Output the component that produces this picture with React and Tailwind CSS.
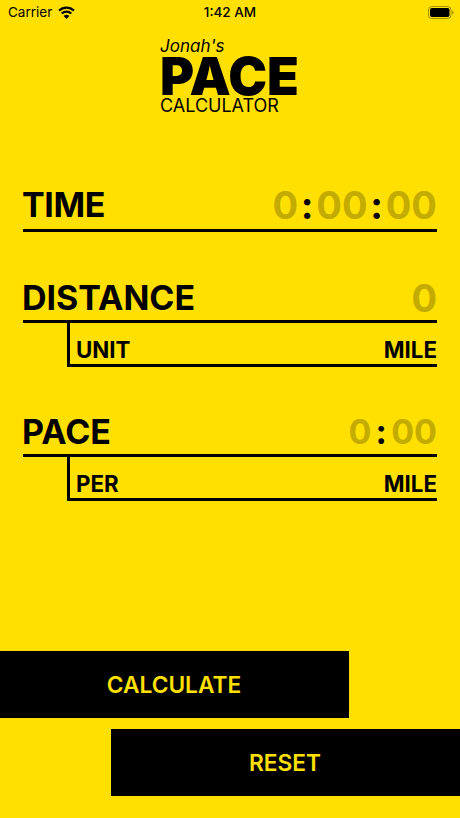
import React from "react";

const Colon = ({ wide }) => (
  <span className={wide ? "mx-[4.200px] text-black" : "mx-[2.750px] text-black"}>:</span>
);

function Row({ label, children, tall, small }) {
  return (
    <div className={`mx-[23px] flex h-[47px] items-center justify-between border-b-[3px] border-black ${tall ? "pb-[4px]" : "pb-0"}`}>
      <span className={`-ml-[1px] text-[34px] leading-[40px] font-bold text-black ${tall ? "tracking-[-0.4px]" : ""}`}>{label}</span>
      <span className={`${small ? "text-[34px]" : "text-[38px]"} leading-[40px] font-bold text-[#c4ab00]`}>{children}</span>
    </div>
  );
}

function SubRow({ label, value }) {
  return (
    <div className="mr-[23px] ml-[67px] flex h-[44px] items-end justify-between border-b-[3px] border-l-[3px] border-black pl-[6px] text-[22.300px] leading-[28px] font-bold text-black">
      <span>{label}</span>
      <span>{value}</span>
    </div>
  );
}

export default function App() {
  return (
    <div className="flex h-[818px] w-[460px] flex-col overflow-hidden bg-[#ffe000] font-['Inter',sans-serif] text-black">
      <div className="flex h-[24px] items-center justify-between pr-[6px] pl-[8px] text-[13.500px] leading-[24px] font-normal">
        <div className="flex items-center gap-[6px]">
          <span>Carrier</span>
          <svg width="17" height="13" viewBox="0 0 17 13">
            <path d="M1 4.600a10.800 10.800 0 0 1 15 0" fill="none" stroke="#000" strokeWidth="2.200" />
            <path d="M3.700 7.500a7 7 0 0 1 9.600 0" fill="none" stroke="#000" strokeWidth="2.200" />
            <path d="M8.500 13l2.900-3a4 4 0 0 0-5.800 0z" fill="#000" />
          </svg>
        </div>
        <span className="absolute left-0 w-[460px] text-center font-medium">1:42 AM</span>
        <svg width="26" height="13" viewBox="0 0 26 13">
          <rect x="0.500" y="0.500" width="22.500" height="12" rx="3.500" fill="none" stroke="#000" strokeOpacity="0.35" />
          <rect x="2" y="2" width="19.500" height="9" rx="2" fill="#000" />
          <path d="M24.300 4.500v4c.8-.3 1.300-1.100 1.300-2s-.5-1.700-1.300-2z" fill="#000" fillOpacity="0.4" />
        </svg>
      </div>

      <div className="mt-[12px] ml-[160px] flex h-[79px] flex-col">
        <span className="text-[17px] leading-[20px] italic">Jonah's</span>
        <span className="text-[52px] leading-[41px] font-black">PACE</span>
        <span className="text-[18px] leading-[18px]">CALCULATOR</span>
      </div>

      <div className="mt-[70px]">
        <Row label="TIME" tall>0<Colon />00<Colon />00</Row>
      </div>
      <div className="mt-[44px]">
        <Row label="DISTANCE">0</Row>
        <SubRow label="UNIT" value="MILE" />
      </div>
      <div className="mt-[43px]">
        <Row label="PACE" small>0<Colon wide />00</Row>
        <SubRow label="PER" value="MILE" />
      </div>

      <div className="mt-[150px] flex h-[67px] w-[349px] items-center justify-center bg-black pt-[1px] pr-[1px] text-[22.700px] font-semibold text-[#ffe000]">
        CALCULATE
      </div>
      <div className="mt-[11px] ml-[111px] flex h-[67px] w-[349px] items-center justify-center bg-black pt-[1px] pr-[1px] text-[22.700px] font-semibold text-[#ffe000]">
        RESET
      </div>
    </div>
  );
}
